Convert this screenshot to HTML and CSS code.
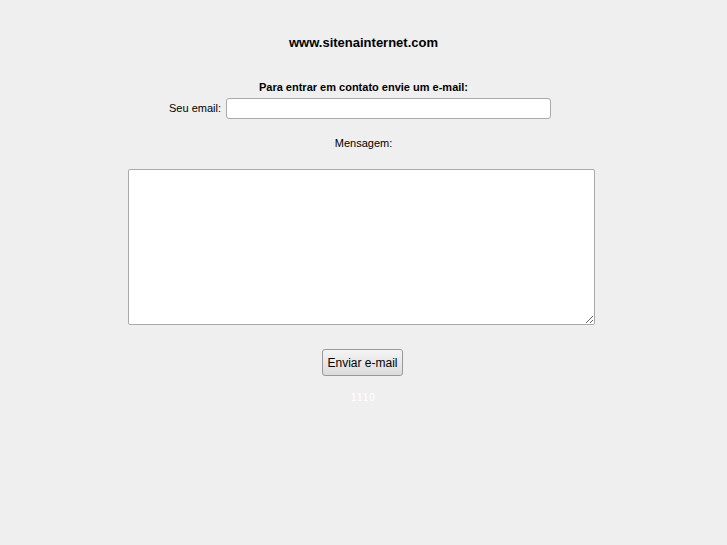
FILE: index.html
```html
<!DOCTYPE html>
<html>
<head>
<meta charset="utf-8">
<link rel="stylesheet" href="styles.css">
</head>
<body>
<div class="page">
  <h1 class="title">www.sitenainternet.com</h1>
  <form class="form">
    <p class="intro">Para entrar em contato envie um e-mail:</p>
    <div class="email-row">
      <label class="label" for="email">Seu email:</label>
      <input class="email" id="email" type="text">
    </div>
    <p class="msg-label">Mensagem:</p>
    <textarea class="message"></textarea>
    <button class="send" type="button">Enviar e-mail</button>
    <div class="counter">1110</div>
  </form>
</div>
</body>
</html>
```
FILE: styles.css
```css
html, body {
  margin: 0;
  padding: 0;
  background: #efefef;
}
body {
  font-family: "Liberation Sans", Arial, sans-serif;
  color: #000;
}
.page {
  display: flex;
  flex-direction: column;
  align-items: center;
  padding-top: 35px;
}
.title {
  margin: 0;
  font-size: 13px;
  font-weight: bold;
  line-height: 16px;
}
.form {
  display: flex;
  flex-direction: column;
  align-items: center;
  margin-top: 29px;
}
.intro {
  margin: 0;
  font-size: 11px;
  font-weight: bold;
  line-height: 14px;
}
.email-row {
  display: flex;
  align-items: center;
  gap: 5px;
  margin-top: 4px;
  margin-left: -7px;
}
.label {
  font-size: 11px;
  line-height: 12px;
  margin-top: -1px;
}
.email {
  box-sizing: border-box;
  width: 325px;
  height: 21px;
  margin: 0;
  border: 1px solid #a9a9a9;
  border-radius: 3px;
  background: #fff;
}
.msg-label {
  margin: 17px 0 0;
  font-size: 11px;
  line-height: 14px;
}
.message {
  box-sizing: border-box;
  width: 467px;
  height: 156px;
  margin-top: 19px;
  margin-left: -5px;
  border: 1px solid #a9a9a9;
  border-radius: 2px;
  background: #fff;
}
.send {
  margin-top: 24px;
  margin-left: -2px;
  box-sizing: border-box;
  width: 81px;
  height: 27px;
  font-family: "Liberation Sans", Arial, sans-serif;
  font-size: 12px;
  border: 1px solid #999;
  border-radius: 3px;
  background: linear-gradient(#f4f4f4, #dcdcdc);
  padding: 0;
}
.counter {
  margin-top: 16px;
  font-size: 10px;
  letter-spacing: 1px;
  color: #fff;
}
```
